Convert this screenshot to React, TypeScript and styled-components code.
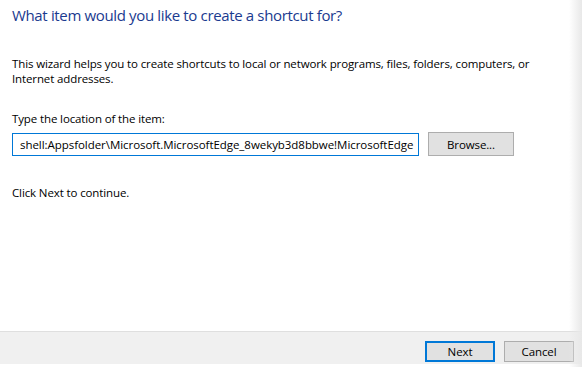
import React from "react";
import styled, { createGlobalStyle } from "styled-components";

const Global = createGlobalStyle`
  html, body { margin: 0; padding: 0; background: #ffffff; }
  body { font-family: "Open Sans", "Noto Sans", "Liberation Sans", sans-serif; }
`;

const Window = styled.div`
  position: relative;
  width: 582px;
  height: 367px;
  display: flex;
  flex-direction: column;
  background: #ffffff;
  overflow: hidden;
  color: #000000;
`;

const Content = styled.div`
  flex: 1;
  display: flex;
  flex-direction: column;
  padding: 4px 12px 0 12px;
`;

const Title = styled.h1`
  margin: 0;
  font-weight: 400;
  font-size: 15px;
  line-height: 22px;
  color: #1a3a8f;
  letter-spacing: -0.35px;
`;

const Text = styled.p<{ $top: number }>`
  margin: ${(p) => p.$top}px 0 0 0;
  font-size: 11.5px;
  line-height: 15px;
  letter-spacing: -0.12px;
  white-space: nowrap;
`;

const FieldRow = styled.div`
  display: flex;
  align-items: center;
  gap: 9px;
  margin-top: 6px;
`;

const Input = styled.input`
  box-sizing: border-box;
  width: 407px;
  height: 23px;
  border: 1px solid #0078d7;
  padding: 0 0 0 7px;
  font-family: inherit;
  font-size: 11.5px;
  letter-spacing: -0.05px;
  color: #000;
  background: #fff;
  outline: none;
`;

const Button = styled.button<{ $default?: boolean }>`
  box-sizing: border-box;
  width: 70px;
  height: 21px;
  padding: 0;
  background: #e1e1e1;
  border: ${(p) => (p.$default ? "2px solid #0078d7" : "1px solid #adadad")};
  font-family: inherit;
  font-size: 11.5px;
  letter-spacing: -0.12px;
  color: #000;
`;

const BrowseButton = styled(Button)`
  width: 86px;
  height: 24px;
`;

const Footer = styled.div`
  box-sizing: border-box;
  height: 33px;
  margin-bottom: 3px;
  background: #f0f0f0;
  border-top: 1px solid #dfdfdf;
  display: flex;
  justify-content: flex-end;
  align-items: flex-end;
  gap: 9px;
  padding: 0 8px 2px 0;
`;

const EdgeShade = styled.div`
  position: absolute;
  top: 0;
  right: 0;
  width: 13px;
  height: 100%;
  background: linear-gradient(to right, rgba(230, 230, 230, 0), rgba(232, 232, 232, 1));
  pointer-events: none;
`;

export default function App() {
  return (
    <Window>
      <Global />
      <Content>
        <Title>What item would you like to create a shortcut for?</Title>
        <Text $top={30}>
          This wizard helps you to create shortcuts to local or network programs, files, folders, computers, or
          <br />
          Internet addresses.
        </Text>
        <Text $top={25}>Type the location of the item:</Text>
        <FieldRow>
          <Input readOnly value="shell:Appsfolder\Microsoft.MicrosoftEdge_8wekyb3d8bbwe!MicrosoftEdge" />
          <BrowseButton>Browse...</BrowseButton>
        </FieldRow>
        <Text $top={29}>Click Next to continue.</Text>
      </Content>
      <Footer>
        <Button $default>Next</Button>
        <Button>Cancel</Button>
      </Footer>
      <EdgeShade />
    </Window>
  );
}
